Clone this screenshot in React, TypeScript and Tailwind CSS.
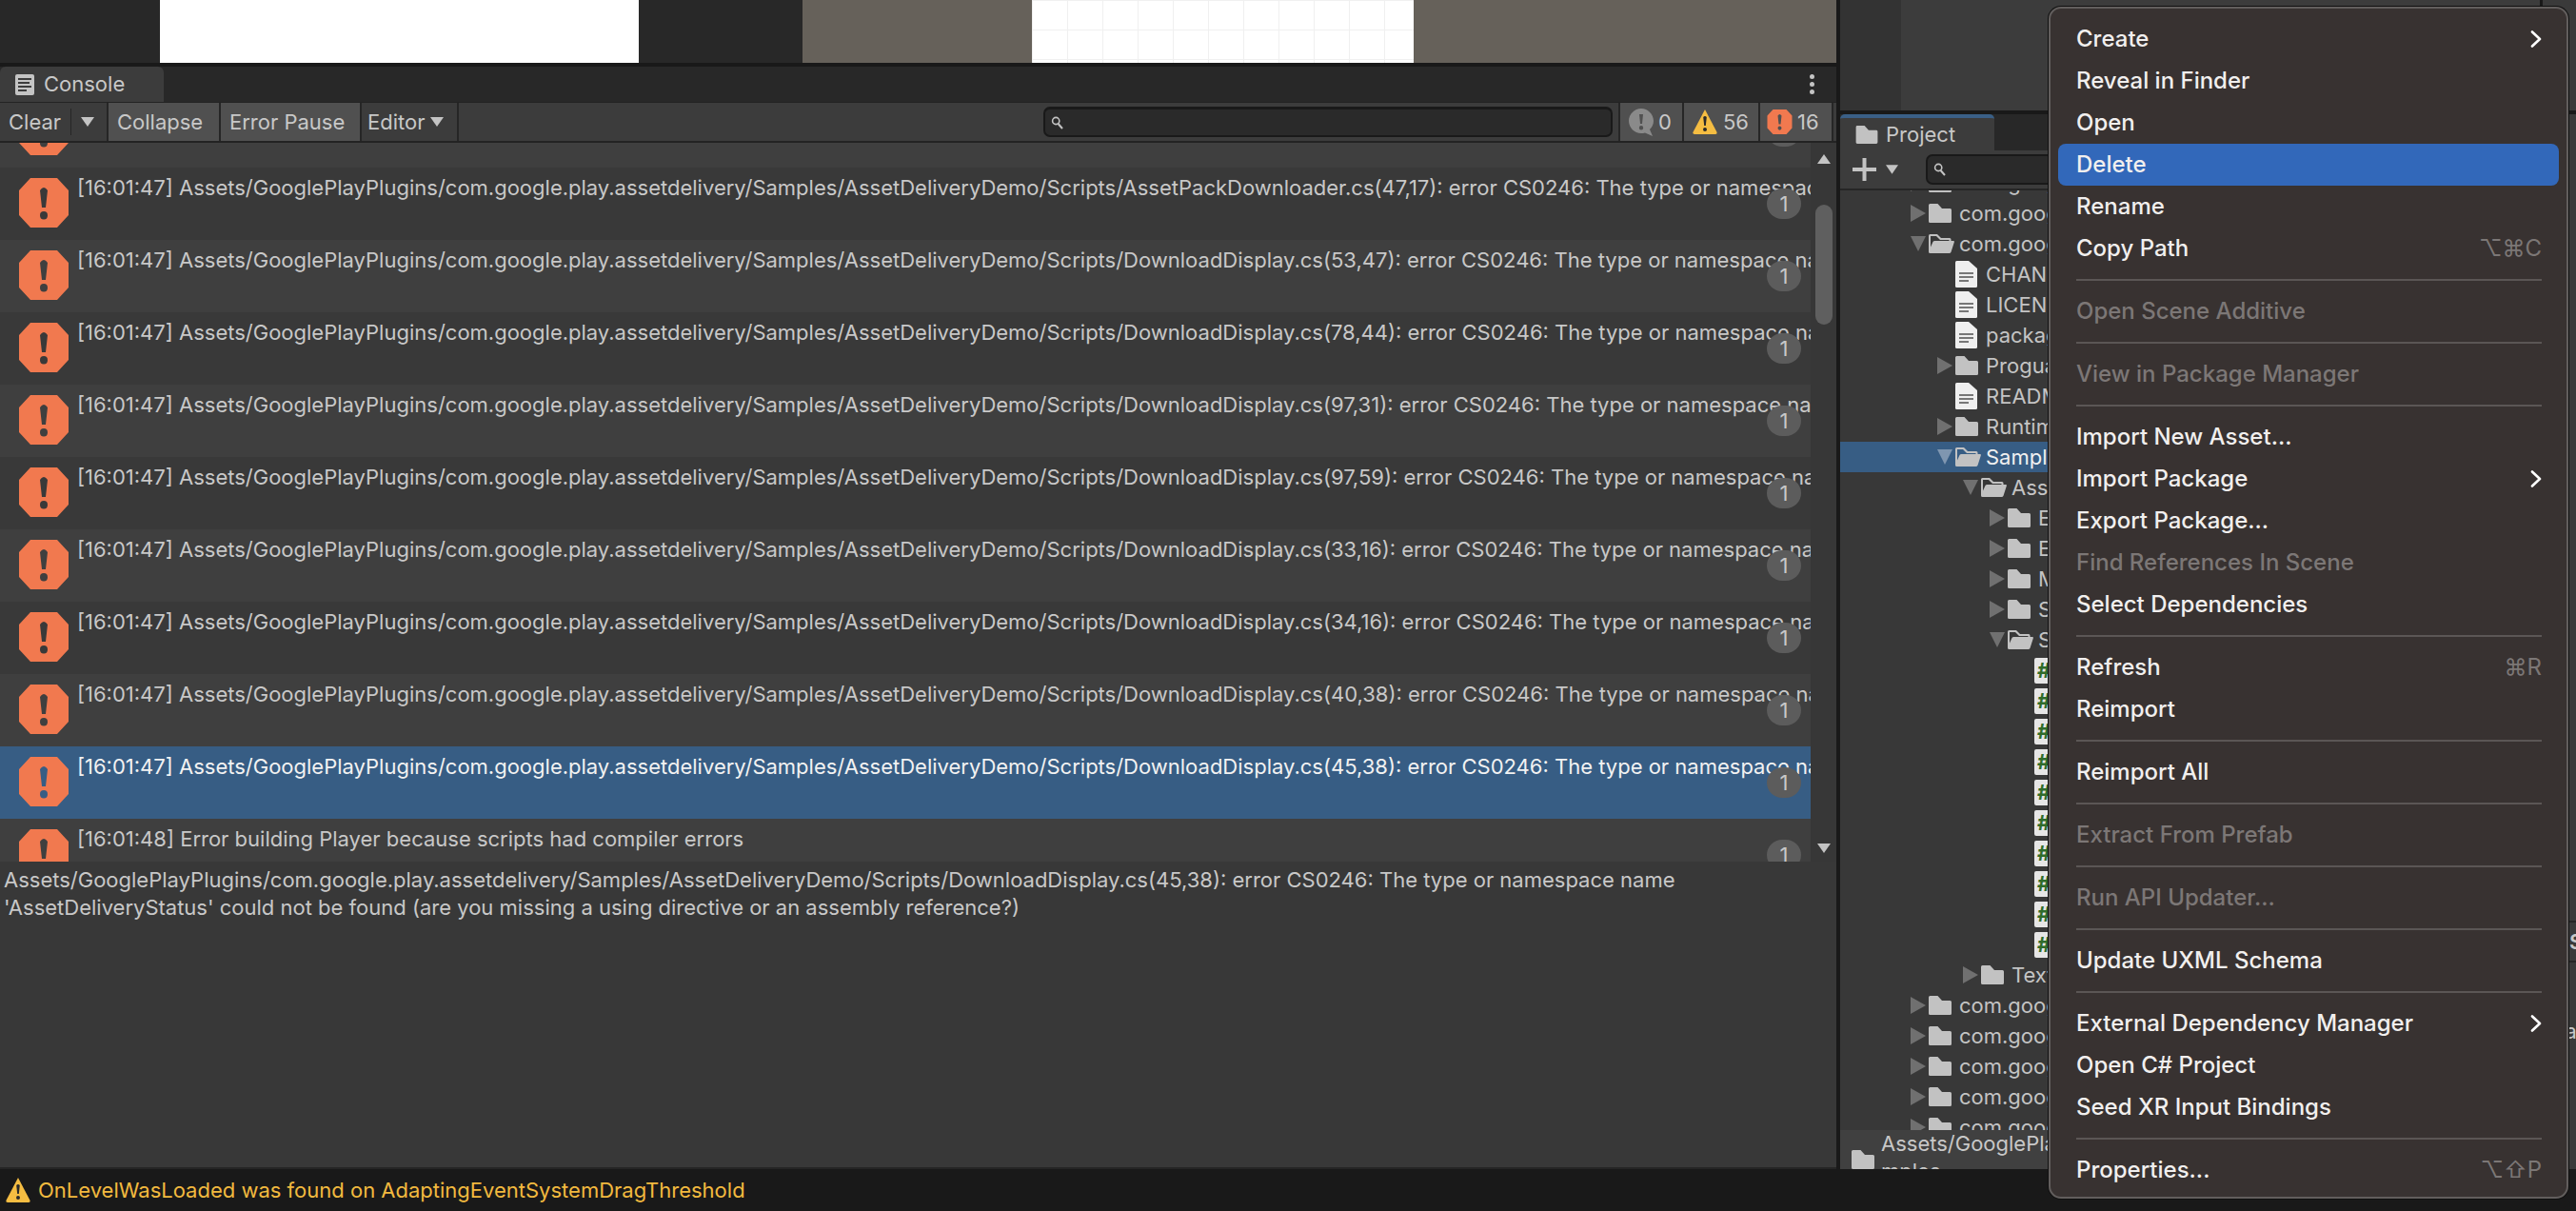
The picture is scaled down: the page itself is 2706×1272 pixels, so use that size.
import React from "react";

const prefix = "[16:01:47] Assets/GooglePlayPlugins/com.google.play.assetdelivery/Samples/AssetDeliveryDemo/Scripts/";
const tail = ": error CS0246: The type or namespace name 'AssetDeliveryStatus' could not be found";

const logs = [
  { text: prefix + "AssetPackDownloader.cs(36,17)" + tail },
  { text: prefix + "AssetPackDownloader.cs(47,17)" + tail },
  { text: prefix + "DownloadDisplay.cs(53,47)" + tail },
  { text: prefix + "DownloadDisplay.cs(78,44)" + tail },
  { text: prefix + "DownloadDisplay.cs(97,31)" + tail },
  { text: prefix + "DownloadDisplay.cs(97,59)" + tail },
  { text: prefix + "DownloadDisplay.cs(33,16)" + tail },
  { text: prefix + "DownloadDisplay.cs(34,16)" + tail },
  { text: prefix + "DownloadDisplay.cs(40,38)" + tail },
  { text: prefix + "DownloadDisplay.cs(45,38)" + tail, selected: true },
  { text: "[16:01:48] Error building Player because scripts had compiler errors" },
];

type Kind = "closed" | "open" | "doc" | "cs";
type Node = { name: string; level: number; kind: Kind; selected?: boolean };

const tree: Node[] = [
  { name: "com.google.android", level: 0, kind: "closed" },
  { name: "com.google.play.common", level: 0, kind: "closed" },
  { name: "com.google.play.assetdelivery", level: 0, kind: "open" },
  { name: "CHANGELOG.md", level: 1, kind: "doc" },
  { name: "LICENSE.md", level: 1, kind: "doc" },
  { name: "package.json", level: 1, kind: "doc" },
  { name: "Proguard", level: 1, kind: "closed" },
  { name: "README.md", level: 1, kind: "doc" },
  { name: "Runtime", level: 1, kind: "closed" },
  { name: "Samples", level: 1, kind: "open", selected: true },
  { name: "AssetDeliveryDemo", level: 2, kind: "open" },
  { name: "Editor", level: 3, kind: "closed" },
  { name: "Examples", level: 3, kind: "closed" },
  { name: "Materials", level: 3, kind: "closed" },
  { name: "Scenes", level: 3, kind: "closed" },
  { name: "Scripts", level: 3, kind: "open" },
  { name: "AssetPackDownloader", level: 4, kind: "cs" },
  { name: "DownloadDisplay", level: 4, kind: "cs" },
  { name: "DownloadBar", level: 4, kind: "cs" },
  { name: "SceneLoader", level: 4, kind: "cs" },
  { name: "PackList", level: 4, kind: "cs" },
  { name: "PackStatus", level: 4, kind: "cs" },
  { name: "PackButton", level: 4, kind: "cs" },
  { name: "Retry", level: 4, kind: "cs" },
  { name: "Progress", level: 4, kind: "cs" },
  { name: "Settings", level: 4, kind: "cs" },
  { name: "Textures", level: 2, kind: "closed" },
  { name: "com.google.play.core", level: 0, kind: "closed" },
  { name: "com.google.play.games", level: 0, kind: "closed" },
  { name: "com.google.play.instant", level: 0, kind: "closed" },
  { name: "com.google.play.review", level: 0, kind: "closed" },
  { name: "com.google.play.update", level: 0, kind: "closed" },
];

const indent = ["pl-[74px]", "pl-[102px]", "pl-[129px]", "pl-[157px]", "pl-[204px]"];

type MenuItem = { label?: string; disabled?: boolean; active?: boolean; sub?: boolean; keys?: string; sep?: boolean };

const menu: MenuItem[] = [
  { label: "Create", sub: true },
  { label: "Reveal in Finder" },
  { label: "Open" },
  { label: "Delete", active: true },
  { label: "Rename" },
  { label: "Copy Path", keys: "⌥⌘C" },
  { sep: true },
  { label: "Open Scene Additive", disabled: true },
  { sep: true },
  { label: "View in Package Manager", disabled: true },
  { sep: true },
  { label: "Import New Asset..." },
  { label: "Import Package", sub: true },
  { label: "Export Package..." },
  { label: "Find References In Scene", disabled: true },
  { label: "Select Dependencies" },
  { sep: true },
  { label: "Refresh", keys: "⌘R" },
  { label: "Reimport" },
  { sep: true },
  { label: "Reimport All" },
  { sep: true },
  { label: "Extract From Prefab", disabled: true },
  { sep: true },
  { label: "Run API Updater...", disabled: true },
  { sep: true },
  { label: "Update UXML Schema" },
  { sep: true },
  { label: "External Dependency Manager", sub: true },
  { label: "Open C# Project" },
  { label: "Seed XR Input Bindings" },
  { sep: true },
  { label: "Properties...", keys: "⌥⇧P" },
];

const ErrorIcon = ({ className }: { className: string }) => (
  <svg viewBox="0 0 52 52" className={className}>
    <path
      fillRule="evenodd"
      fill="#f1794f"
      d="M12 0H40L52 13V39L40 52H12L0 39V13ZM22 13Q26 7 30 13L28 31H24ZM26 35A4 4.2 0 1 0 26.01 43.4A4 4.2 0 1 0 26 35Z"
    />
  </svg>
);

const WarnIcon = ({ className }: { className: string }) => (
  <svg viewBox="0 0 26 26" className={className}>
    <path fill="#f5bd42" d="M13 0L25.6 24Q26 26 24 26H2Q0 26 .4 24Z" />
    <path fill="#2a2a2a" d="M11.2 8Q13 6 14.8 8L13.8 17H12.2ZM13 19A1.9 1.9 0 1 0 13.01 23A1.9 1.9 0 1 0 13 19Z" />
  </svg>
);

const InfoIcon = () => (
  <svg viewBox="0 0 26 29" className="h-[29px] w-[26px]">
    <path
      fillRule="evenodd"
      fill="#8a8a8a"
      d="M13 0C20 0 26 6 26 13C26 17 24 20 22 22L25 29L17 25.4Q15 26 13 26C6 26 0 20 0 13C0 6 6 0 13 0ZM11 6L12 16H14L15 6ZM13 18A2.2 2.2 0 1 0 13.01 22.4A2.2 2.2 0 1 0 13 18Z"
    />
  </svg>
);

const SearchIcon = () => (
  <svg viewBox="0 0 14 14" className="h-[14px] w-[14px]" fill="none" stroke="#c4c4c4" strokeWidth="1.6">
    <circle cx="5.2" cy="5" r="3.6" />
    <path d="M7.6 8L12 13" strokeWidth="2" />
  </svg>
);

const Caret = ({ className }: { className: string }) => (
  <svg viewBox="0 0 14 10" className={className}>
    <path fill="#c4c4c4" d="M0 0H14L7 10Z" />
  </svg>
);

const ClosedFolder = ({ className }: { className: string }) => (
  <svg viewBox="0 0 24 20" className={className}>
    <path fill="#c2c2c2" d="M1.5 0H9.5L14 5H22.5Q24 5 24 6.5V18.5Q24 20 22.5 20H1.5Q0 20 0 18.5V1.5Q0 0 1.5 0Z" />
  </svg>
);

const OpenFolder = () => (
  <svg viewBox="0 0 27 20" className="h-[20px] w-[27px]">
    <path
      fill="#c2c2c2"
      d="M1.5 0H9L13 4H22Q23.500 4 23.500 5.500V7H26Q27.300 7 26.800 8.500L23.500 18.800Q23 20 21.500 20H1.500Q0 20 0 18.500V1.500Q0 0 1.500 0ZM2 2V13.500L4.500 8Q5 7 6.500 7H21.500V6H12L8 2Z"
    />
  </svg>
);

const DocIcon = () => (
  <svg viewBox="0 0 23 28" className="h-[28px] w-[23px]">
    <path fill="#efefef" d="M1.500 0H14L23 8V26.500Q23 28 21.500 28H1.500Q0 28 0 26.500V1.500Q0 0 1.500 0Z" />
    <path fill="#777777" d="M4 12H19V14H4ZM4 16H19V18H4ZM4 20H14V22H4Z" />
  </svg>
);

const TreeRow = ({ node }: { node: Node }) => {
  const hasArrow = node.kind === "closed" || node.kind === "open";
  const arrowFill = node.selected ? "#7f96b0" : "#707070";
  return (
    <div
      className={`flex h-[32px] shrink-0 items-center whitespace-nowrap text-[22px] ${indent[node.level]} ${
        node.selected ? "bg-[#375d84] text-[#f0f0f0]" : "text-[#c4c4c4]"
      }`}
    >
      {hasArrow && (
        <svg viewBox="0 0 16 18" className="h-[18px] w-[16px] shrink-0">
          {node.kind === "closed" ? (
            <path fill={arrowFill} d="M0 0L16 9L0 18Z" />
          ) : (
            <path fill={arrowFill} d="M0 1H16L8 17Z" />
          )}
        </svg>
      )}
      {hasArrow && <div className="w-[3px] shrink-0" />}
      {node.kind === "closed" && <ClosedFolder className="h-[20px] w-[24px] shrink-0" />}
      {node.kind === "open" && <OpenFolder />}
      {node.kind === "doc" && (
        <div className="ml-[19px] flex shrink-0">
          <DocIcon />
        </div>
      )}
      {node.kind === "cs" && (
        <div className="flex h-[27px] w-[26px] shrink-0 items-center rounded-[2px] bg-[#e6e6e6] pl-[3px] text-[22px] font-bold leading-none text-[#2f6b2a]">
          #
        </div>
      )}
      <span className={node.kind === "closed" ? "ml-[8px]" : node.kind === "open" ? "ml-[5px]" : "ml-[9px]"}>
        {node.name}
      </span>
    </div>
  );
};

const LogRow = ({ text, index, selected }: { text: string; index: number; selected?: boolean }) => (
  <div
    className={`relative flex h-[76px] shrink-0 items-start overflow-hidden pl-[20px] ${
      selected ? "bg-[#375d84]" : index % 2 === 1 ? "bg-[#393939]" : "bg-[#3f3f3f]"
    }`}
  >
    <ErrorIcon className="mt-[11px] h-[52px] w-[52px] shrink-0" />
    <div className={`ml-[9px] mt-[7px] whitespace-nowrap text-[22px] leading-[29px] ${selected ? "text-[#f2f2f2]" : "text-[#c8c8c8]"}`}>
      {text}
    </div>
    <div className="absolute left-[1856px] top-[22px] flex h-[32px] w-[36px] items-center justify-center rounded-full bg-[#5c5c5c] text-[22px] text-[#c8c8c8]">
      1
    </div>
  </div>
);

const ToolButton = ({ children, on, className }: { children: React.ReactNode; on?: boolean; className: string }) => (
  <div
    className={`flex h-full shrink-0 items-center border-r-2 border-[#262626] text-[22px] text-[#c8c8c8] ${
      on ? "bg-[#505050]" : "bg-[#3c3c3c]"
    } ${className}`}
  >
    {children}
  </div>
);

const ContextMenu = () => (
  <div className="absolute left-[2152px] top-[7px] flex h-[1252px] w-[546px] flex-col rounded-[13px] border-2 border-[#625e5d] bg-[#383231] pt-[10px] text-[24px] font-medium shadow-[0_0_0_1px_#111111]">
    {menu.map((item, i) =>
      item.sep ? (
        <div key={i} className="flex h-[22px] shrink-0 items-center pl-[27px] pr-[26px]">
          <div className="h-[2px] w-full bg-[#5b5655]" />
        </div>
      ) : (
        <div
          key={i}
          className={`mx-[8px] flex h-[44px] shrink-0 items-center justify-between rounded-[8px] pl-[19px] pr-[18px] ${
            item.active ? "bg-[#3268ba]" : ""
          } ${item.disabled ? "text-[#7c7776]" : "text-[#f1efee]"}`}
        >
          <span>{item.label}</span>
          {item.sub && (
            <svg viewBox="0 0 12 18" className="h-[18px] w-[12px]" fill="none" stroke="#ffffff" strokeWidth="2.6" strokeLinecap="round" strokeLinejoin="round">
              <path d="M2 1.500L10 9L2 16.500" />
            </svg>
          )}
          {item.keys && (
            <span className="font-['Inter','DejaVu_Sans',sans-serif] font-normal text-[#7c7776]">{item.keys}</span>
          )}
        </div>
      )
    )}
  </div>
);

export default function App() {
  return (
    <div className="relative flex h-[1272px] w-[2706px] flex-col overflow-hidden bg-[#191919] font-['Inter','DejaVu_Sans',sans-serif]">
      <div className="flex h-[1228px] shrink-0">
        {/* console column */}
        <div className="flex w-[1929px] shrink-0 flex-col">
          <div className="flex h-[66px] shrink-0">
            <div className="w-[168px] bg-[#282828]" />
            <div className="w-[503px] bg-white" />
            <div className="w-[172px] bg-[#282828]" />
            <div className="w-[241px] bg-[#66615a]" />
            <div className="w-[401px] bg-white bg-[linear-gradient(#f0f0f0_1px,transparent_1px),linear-gradient(90deg,#f0f0f0_1px,transparent_1px)] bg-[size:37px_31px] bg-[position:0_31px]" />
            <div className="flex-1 bg-[#66615a]" />
          </div>
          <div className="h-[4px] shrink-0 bg-[#191919]" />
          <div className="flex h-[37px] shrink-0 items-stretch justify-between bg-[#282828]">
            <div className="flex w-[172px] items-center rounded-t-[6px] bg-[#3c3c3c] pl-[16px] text-[22px] text-[#c8c8c8]">
              <svg viewBox="0 0 20 22" className="h-[22px] w-[20px] shrink-0">
                <rect width="20" height="22" rx="2" fill="#c4c4c4" />
                <path fill="#3c3c3c" d="M3 4H17V6H3ZM3 8H15V10H3ZM3 12H17V14H3ZM3 16H12V18H3Z" />
              </svg>
              <span className="ml-[10px]">Console</span>
            </div>
            <div className="flex w-[52px] flex-col items-center justify-center gap-[3px] pl-[0px]">
              <div className="h-[5px] w-[5px] rounded-full bg-[#c4c4c4]" />
              <div className="h-[5px] w-[5px] rounded-full bg-[#c4c4c4]" />
              <div className="h-[5px] w-[5px] rounded-full bg-[#c4c4c4]" />
            </div>
          </div>
          <div className="h-[1px] shrink-0 bg-[#232323]" />
          <div className="flex h-[40px] shrink-0 items-stretch bg-[#3c3c3c] pl-[2px]">
            <ToolButton className="w-[112px] pl-[7px]">
              <span>Clear</span>
              <div className="ml-[10px] h-[28px] w-[1px] bg-[#262626]" />
              <Caret className="ml-[10px] h-[10px] w-[14px]" />
            </ToolButton>
            <ToolButton on className="w-[118px] pl-[9px]">Collapse</ToolButton>
            <ToolButton on className="w-[148px] pl-[9px]">Error Pause</ToolButton>
            <ToolButton className="w-[102px] pl-[6px]">
              <span>Editor</span>
              <Caret className="ml-[6px] h-[10px] w-[14px]" />
            </ToolButton>
            <div className="ml-auto mr-[6px] flex h-[32px] w-[598px] items-center self-center rounded-[7px] border-2 border-[#191919] border-t-[3px] bg-[#2a2a2a] pl-[6px]">
              <SearchIcon />
            </div>
            <ToolButton on className="w-[69px] gap-[5px] border-l-2 pl-[9px]">
              <InfoIcon />
              <span>0</span>
            </ToolButton>
            <ToolButton on className="w-[80px] gap-[6px] pl-[9px]">
              <WarnIcon className="h-[26px] w-[26px]" />
              <span>56</span>
            </ToolButton>
            <ToolButton on className="w-[77px] gap-[5px] pl-[7px]">
              <ErrorIcon className="h-[26px] w-[27px]" />
              <span>16</span>
            </ToolButton>
            <div className="w-[3px] shrink-0" />
          </div>
          <div className="h-[2px] shrink-0 bg-[#232323]" />
          <div className="flex h-[755px] shrink-0">
            <div className="w-[1902px] shrink-0 overflow-hidden">
              <div className="-mt-[50px] flex flex-col">
                {logs.map((l, i) => (
                  <LogRow key={i} text={l.text} index={i} selected={l.selected} />
                ))}
              </div>
            </div>
            <div className="flex flex-1 flex-col items-center bg-[#373737] pt-[12px]">
              <svg viewBox="0 0 14 10" className="h-[10px] w-[14px]">
                <path fill="#c4c4c4" d="M7 0L14 10H0Z" />
              </svg>
              <div className="mt-[43px] h-[126px] w-[18px] rounded-full bg-[#5f5f5f]" />
              <div className="flex-1" />
              <Caret className="mb-[9px] h-[10px] w-[14px]" />
            </div>
          </div>
          <div className="flex-1 border-b-2 border-[#252525] bg-[#383838] pl-[4px] pt-[5px] text-[22px] leading-[29px] text-[#c8c8c8]">
            Assets/GooglePlayPlugins/com.google.play.assetdelivery/Samples/AssetDeliveryDemo/Scripts/DownloadDisplay.cs(45,38): error CS0246: The type or namespace name
            <br />
            'AssetDeliveryStatus' could not be found (are you missing a using directive or an assembly reference?)
          </div>
        </div>

        <div className="w-[4px] shrink-0 bg-[#191919]" />

        {/* project column */}
        <div className="flex min-w-0 flex-1 flex-col">
          <div className="flex h-[116px] shrink-0">
            <div className="w-[64px] bg-[#333333]" />
            <div className="w-[671px] bg-[#3c3c3c]" />
            <div className="w-[3px] bg-[#191919]" />
            <div className="flex-1 bg-[#3a3a3a]" />
          </div>
          <div className="h-[4px] shrink-0 bg-[#191919]" />
          <div className="flex min-h-0 flex-1">
            <div className="flex w-[735px] shrink-0 flex-col">
              <div className="flex h-[38px] shrink-0 bg-[#282828]">
                <div className="flex w-[162px] items-center rounded-t-[5px] border-t-[4px] border-[#3a5f86] bg-[#3c3c3c] pl-[16px] text-[22px] text-[#c8c8c8]">
                  <ClosedFolder className="h-[19px] w-[24px] shrink-0" />
                  <span className="ml-[8px]">Project</span>
                </div>
              </div>
              <div className="flex h-[40px] shrink-0 items-center bg-[#3c3c3c] pl-[13px]">
                <svg viewBox="0 0 25 24" className="h-[24px] w-[25px] shrink-0">
                  <path fill="#c4c4c4" d="M10.500 0H14.500V10H25V14H14.500V24H10.500V14H0V10H10.500Z" />
                </svg>
                <Caret className="ml-[10px] h-[10px] w-[13px]" />
                <div className="ml-[29px] flex h-[32px] w-[500px] items-center rounded-[7px] border-2 border-[#191919] bg-[#2a2a2a] pl-[6px]">
                  <SearchIcon />
                </div>
              </div>
              <div className="h-[2px] shrink-0 bg-[#262626]" />
              <div className="min-h-0 flex-1 overflow-hidden bg-[#383838]">
                <div className="-mt-[24px] flex flex-col">
                  {tree.map((n) => (
                    <TreeRow key={n.name} node={n} />
                  ))}
                </div>
              </div>
              <div className="h-[41px] shrink-0 overflow-hidden bg-[#404040] pl-[12px]">
                <div className="flex items-center">
                  <ClosedFolder className="mt-[4px] h-[28px] w-[24px] shrink-0" />
                  <div className="ml-[7px] w-[400px] whitespace-nowrap text-[22px] leading-[29px] text-[#c8c8c8]">
                    Assets/GooglePlayPlugins/com.google.play.assetdelivery/Sa
                    <br />
                    mples
                  </div>
                </div>
              </div>
            </div>
            {/* inspector sliver */}
            <div className="w-[3px] shrink-0 bg-[#191919]" />
            <div className="flex min-w-0 flex-1 flex-col overflow-hidden bg-[#3a3a3a] text-[22px] text-[#c8c8c8]">
              <div className="h-[847px] shrink-0" />
              <div className="flex h-[44px] shrink-0 items-center overflow-hidden whitespace-nowrap border-y-2 border-[#262626] pl-[28px] font-semibold">
                Script
              </div>
              <div className="h-[58px] shrink-0" />
              <div className="whitespace-nowrap pl-[2px] leading-[29px]">Class</div>
            </div>
          </div>
        </div>
      </div>

      {/* status bar */}
      <div className="flex h-[44px] shrink-0 items-center pl-[6px] text-[22px] text-[#f2b93f]">
        <WarnIcon className="h-[26px] w-[26px] shrink-0" />
        <span className="ml-[8px]">OnLevelWasLoaded was found on AdaptingEventSystemDragThreshold</span>
      </div>

      <ContextMenu />
    </div>
  );
}
